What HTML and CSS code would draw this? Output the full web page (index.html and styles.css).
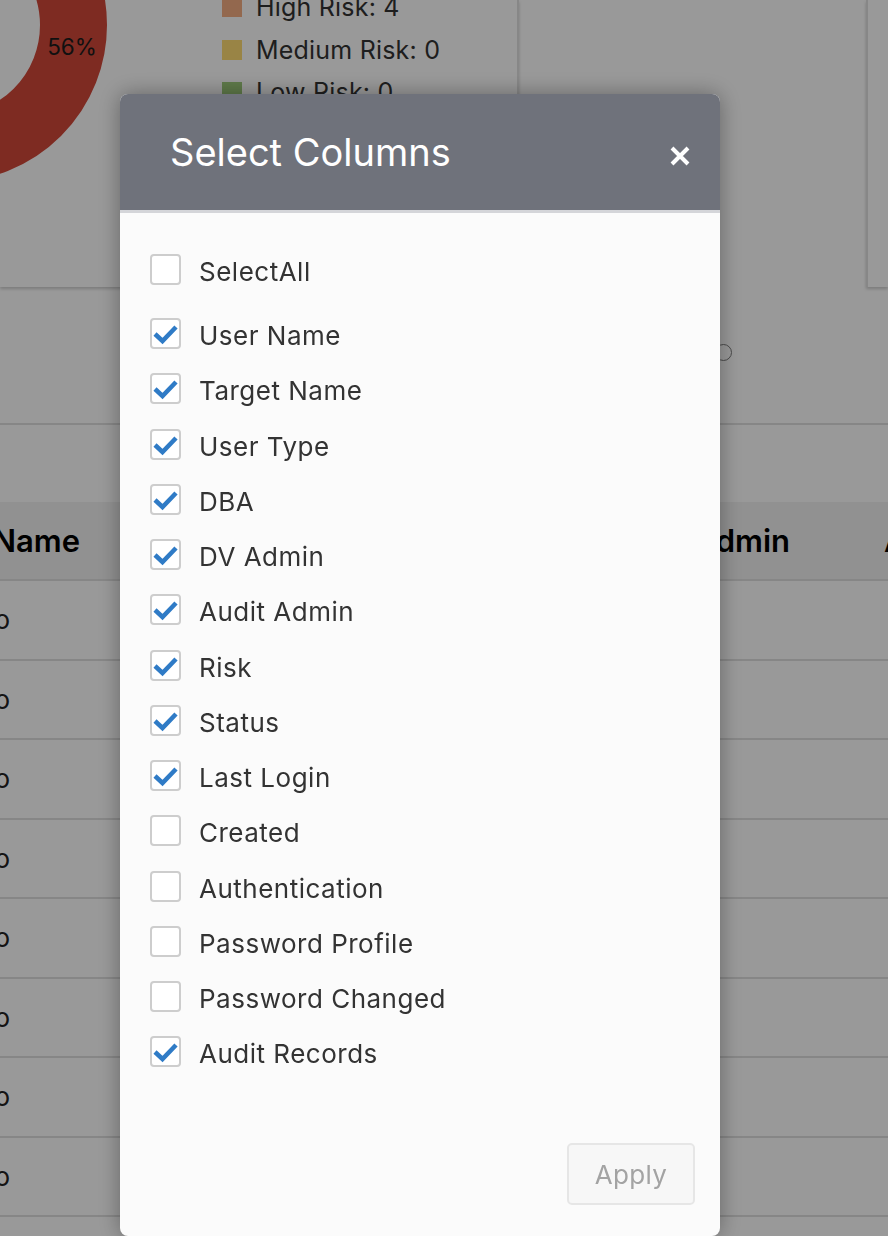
FILE: index.html
```html
<!DOCTYPE html>
<html lang="en">
<head>
<meta charset="utf-8">
<title>Select Columns</title>
<link rel="stylesheet" href="styles.css">
</head>
<body>
<div class="page">
  <div class="cards">
    <div class="card card-chart">
      <svg class="donut" width="200" height="285" viewBox="0 0 200 285">
        <circle cx="-50" cy="25" r="123.5" fill="none" stroke="#d24839" stroke-width="67"/>
        <text x="72" y="55" text-anchor="middle" class="donut-label">56%</text>
      </svg>
      <ul class="legend">
        <li class="legend-item"><span class="swatch swatch-high"></span>High Risk: 4</li>
        <li class="legend-item"><span class="swatch swatch-medium"></span>Medium Risk: 0</li>
        <li class="legend-item"><span class="swatch swatch-low"></span>Low Risk: 0</li>
      </ul>
    </div>
    <div class="card card-right"></div>
  </div>
  <div class="filters"><span class="radio"></span></div>
  <div class="table">
    <div class="thead">
      <div class="col col-name">Target Name</div>
      <div class="col col-mid">DV Admin</div>
      <div class="col col-last">Audit Admin</div>
    </div>
    <div class="trow"><div class="col col-name">demo</div></div>
    <div class="trow"><div class="col col-name">demo</div></div>
    <div class="trow"><div class="col col-name">demo</div></div>
    <div class="trow"><div class="col col-name">demo</div></div>
    <div class="trow"><div class="col col-name">demo</div></div>
    <div class="trow"><div class="col col-name">demo</div></div>
    <div class="trow"><div class="col col-name">demo</div></div>
    <div class="trow"><div class="col col-name">demo</div></div>
  </div>
</div>

<div class="overlay"></div>

<div class="modal">
  <div class="modal-header">
    <h2 class="modal-title">Select Columns</h2>
    <button class="close" aria-label="Close">
      <svg width="20" height="20" viewBox="0 0 20 20"><path d="M2 2 L18 18 M18 2 L2 18" stroke="#fff" stroke-width="4" fill="none"/></svg>
    </button>
  </div>
  <div class="modal-body">
    <label class="opt opt-all"><span class="box"></span><span class="opt-label">SelectAll</span></label>
    <div class="opt-list">
      <label class="opt"><span class="box"><svg class="tick" viewBox="0 0 27 27"><path d="M3 14 L10.5 21 L24 7"/></svg></span><span class="opt-label">User Name</span></label>
      <label class="opt"><span class="box"><svg class="tick" viewBox="0 0 27 27"><path d="M3 14 L10.5 21 L24 7"/></svg></span><span class="opt-label">Target Name</span></label>
      <label class="opt"><span class="box"><svg class="tick" viewBox="0 0 27 27"><path d="M3 14 L10.5 21 L24 7"/></svg></span><span class="opt-label">User Type</span></label>
      <label class="opt"><span class="box"><svg class="tick" viewBox="0 0 27 27"><path d="M3 14 L10.5 21 L24 7"/></svg></span><span class="opt-label">DBA</span></label>
      <label class="opt"><span class="box"><svg class="tick" viewBox="0 0 27 27"><path d="M3 14 L10.5 21 L24 7"/></svg></span><span class="opt-label">DV Admin</span></label>
      <label class="opt"><span class="box"><svg class="tick" viewBox="0 0 27 27"><path d="M3 14 L10.5 21 L24 7"/></svg></span><span class="opt-label">Audit Admin</span></label>
      <label class="opt"><span class="box"><svg class="tick" viewBox="0 0 27 27"><path d="M3 14 L10.5 21 L24 7"/></svg></span><span class="opt-label">Risk</span></label>
      <label class="opt"><span class="box"><svg class="tick" viewBox="0 0 27 27"><path d="M3 14 L10.5 21 L24 7"/></svg></span><span class="opt-label">Status</span></label>
      <label class="opt"><span class="box"><svg class="tick" viewBox="0 0 27 27"><path d="M3 14 L10.5 21 L24 7"/></svg></span><span class="opt-label">Last Login</span></label>
      <label class="opt"><span class="box"></span><span class="opt-label">Created</span></label>
      <label class="opt"><span class="box"></span><span class="opt-label">Authentication</span></label>
      <label class="opt"><span class="box"></span><span class="opt-label">Password Profile</span></label>
      <label class="opt"><span class="box"></span><span class="opt-label">Password Changed</span></label>
      <label class="opt"><span class="box"><svg class="tick" viewBox="0 0 27 27"><path d="M3 14 L10.5 21 L24 7"/></svg></span><span class="opt-label">Audit Records</span></label>
    </div>
  </div>
  <div class="modal-footer">
    <button class="apply">Apply</button>
  </div>
</div>
</body>
</html>
```

FILE: styles.css
```css
* { box-sizing: border-box; }
html, body { margin: 0; padding: 0; }
body {
  font-family: Inter, "Noto Sans", "Liberation Sans", sans-serif;
  background: #fff;
  color: #222;
  width: 888px;
  height: 1236px;
  overflow: hidden;
}
.page { width: 888px; height: 1236px; overflow: hidden; }

/* top cards */
.cards { display: flex; height: 287px; }
.card { background: #fff; box-shadow: 0 2px 3px rgba(0,0,0,0.2); }
.card-chart {
  width: 519px;
  flex: none;
  border-right: 2px solid #e2e2e2;
  display: flex;
  overflow: hidden;
}
.donut { flex: none; display: block; }
.donut-label { font-family: Inter, "Liberation Sans", sans-serif; font-size: 22.5px; fill: #1c1c1c; }
.legend {
  list-style: none;
  margin: -14px 0 0 22px;
  padding: 0;
  display: flex;
  flex-direction: column;
}
.legend-item {
  height: 42.5px;
  display: flex;
  align-items: center;
  gap: 14px;
  font-size: 25px;
  letter-spacing: 0.2px;
  color: #333;
  white-space: nowrap;
}
.swatch { width: 20px; height: 20px; flex: none; }
.swatch-high { background: #f5ad82; }
.swatch-medium { background: #ffdc73; }
.swatch-low { background: #9ecb7b; }
.card-right {
  margin-left: 347px;
  flex: 1;
  border-left: 2px solid #e2e2e2;
}

/* filter strip */
.filters {
  height: 138px;
  border-bottom: 2px solid #e0e0e0;
  padding: 57px 0 0 715px;
}
.radio {
  display: block;
  width: 17px;
  height: 17px;
  border: 1.5px solid #7c7c7c;
  border-radius: 50%;
}

/* table */
.table { margin-top: 77px; }
.thead {
  display: flex;
  height: 79px;
  background: #f2f2f2;
  border-bottom: 2px solid #e0e0e0;
  align-items: center;
  font-size: 31px;
  font-weight: 600;
  color: #000;
  white-space: nowrap;
}
.col { flex: none; white-space: nowrap; }
.thead .col-name { margin-left: -300px; width: 380px; text-align: right; }
.thead .col-mid { width: 710px; text-align: right; }
.thead .col-last { padding-left: 94px; }
.trow {
  display: flex;
  height: 79.5px;
  align-items: center;
  border-bottom: 2px solid #e0e0e0;
  font-size: 26px;
  color: #222;
}
.trow .col-name { margin-left: -300px; width: 310px; text-align: right; }

/* overlay + modal */
.overlay { position: fixed; inset: 0; background: rgba(0,0,0,0.4); }
.modal {
  position: fixed;
  left: 120px;
  top: 94px;
  width: 600px;
  height: 1142px;
  background: #fbfbfb;
  border-radius: 8px;
  box-shadow: 0 0 22px rgba(0,0,0,0.35);
  display: flex;
  flex-direction: column;
  overflow: hidden;
}
.modal-header {
  flex: none;
  height: 119px;
  background: #6f727b;
  border-bottom: 3px solid #d4d5d9;
  display: flex;
  align-items: center;
  justify-content: space-between;
  padding: 0 30px 0 50px;
}
.modal-title {
  margin: 0;
  font-size: 38px;
  font-weight: 400;
  line-height: 1;
  color: #fff;
}
.close {
  background: none;
  border: 0;
  padding: 0;
  margin-top: 8px;
  width: 20px;
  height: 20px;
  display: flex;
}
.modal-body { padding: 41px 0 0 30px; }
.opt { display: flex; align-items: center; height: 31px; }
.opt-all { margin-bottom: 33px; }
.opt-list { display: flex; flex-direction: column; gap: 24.28px; }
.box {
  width: 31px;
  height: 31px;
  flex: none;
  border: 2px solid #cdcdcd;
  border-radius: 4px;
  background: #fff;
  display: flex;
}
.tick { width: 27px; height: 27px; }
.tick path { fill: none; stroke: #2f7bc6; stroke-width: 4.5; }
.opt-label {
  margin: 4px 0 0 18px;
  font-size: 26px;
  letter-spacing: 0.5px;
  color: #333;
  white-space: nowrap;
}
.modal-footer {
  margin-top: auto;
  display: flex;
  justify-content: flex-end;
  padding: 0 25px 31px 0;
}
.apply {
  width: 128px;
  height: 62px;
  background: #f7f7f7;
  border: 2px solid #e6e6e6;
  border-radius: 5px;
  font-family: Inter, "Noto Sans", sans-serif;
  font-size: 26px;
  letter-spacing: 0.3px;
  color: #a3a3a3;
}
```
